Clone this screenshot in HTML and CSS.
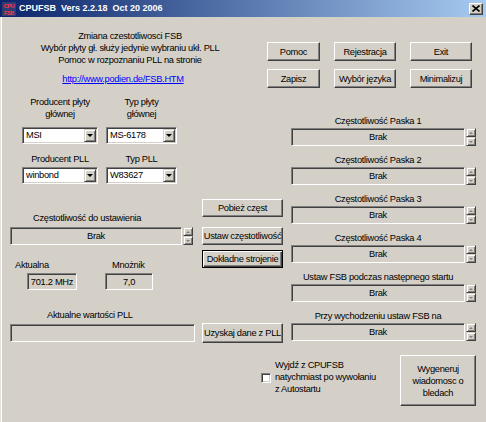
FILE: index.html
```html
<!DOCTYPE html>
<html lang="pl">
<head>
<meta charset="utf-8">
<title>CPUFSB</title>
<link rel="stylesheet" href="styles.css">
</head>
<body>
<div class="window">
  <div class="titlebar">
    <svg class="appicon" width="14" height="14" viewBox="0 0 14 14" aria-hidden="true">
      <rect width="14" height="14" fill="#2e3c78"/>
      <text x="7" y="6" text-anchor="middle" font-family="Liberation Sans" font-size="5.5" font-weight="bold" fill="#ff3a3a">CPU</text>
      <text x="7" y="12.5" text-anchor="middle" font-family="Liberation Sans" font-size="5.5" font-weight="bold" fill="#ff3a3a">FSB</text>
    </svg>
    <span class="title">CPUFSB  Vers 2.2.18  Oct 20 2006</span>
    <div class="close">
      <svg width="8" height="7" viewBox="0 0 8 7" aria-hidden="true"><path d="M0.5 0.5L7.5 6.5M7.5 0.5L0.5 6.5" stroke="#000" stroke-width="1.6"/></svg>
    </div>
  </div>

  <div class="top">
    <div class="intro">
      <div>Zmiana czestotliwosci FSB</div>
      <div>Wybór płyty gł. służy jedynie wybraniu ukł. PLL</div>
      <div>Pomoc w rozpoznaniu PLL na stronie</div>
      <div class="link"><a href="#">http://www.podien.de/FSB.HTM</a></div>
    </div>
    <div class="topbtns">
      <button class="btn">Pomoc</button>
      <button class="btn">Rejestracja</button>
      <button class="btn">Exit</button>
      <button class="btn">Zapisz</button>
      <button class="btn">Wybór języka</button>
      <button class="btn">Minimalizuj</button>
    </div>
  </div>

  <div class="main">
    <div class="leftcol">
      <div class="pair">
        <div class="c1 lbl">Producent płyty<br>głównej</div>
        <div class="c2 lbl">Typ płyty<br>głównej</div>
      </div>
      <div class="pair r-combos-a">
        <div class="c1 combo"><span class="val">MSI</span><span class="drop"></span></div>
        <div class="c2 combo"><span class="val">MS-6178</span><span class="drop"></span></div>
      </div>
      <div class="pair r-labels-b">
        <div class="c1 lbl">Producent PLL</div>
        <div class="c2 lbl">Typ PLL</div>
      </div>
      <div class="pair r-combos-b">
        <div class="c1 combo"><span class="val">winbond</span><span class="drop"></span></div>
        <div class="c2 combo"><span class="val">W83627</span><span class="drop"></span></div>
      </div>

      <div class="freq-lbl">Częstotliwość do ustawienia</div>
      <div class="fieldrow freq-row">
        <div class="field freq-field">Brak</div>
        <div class="spin"><span class="up"></span><span class="dn"></span></div>
      </div>

      <div class="akt-row">
        <span class="akt">Aktualna</span>
        <span>Mnożnik</span>
      </div>
      <div class="val-row">
        <div class="vbox v1">701.2 MHz</div>
        <div class="vbox v2">7,0</div>
      </div>

      <div class="pll-lbl">Aktualne wartości PLL</div>
      <div class="field pll-field"></div>
    </div>

    <div class="midcol">
      <button class="btn b-pobiez">Pobież częst</button>
      <button class="btn b-ustaw">Ustaw częstotliwość</button>
      <button class="btn default b-dokl">Dokładne strojenie</button>
      <button class="btn b-uzyskaj">Uzyskaj dane z PLL</button>
    </div>

    <div class="rightcol">
      <div class="grp">
        <div class="glbl">Częstotliwość Paska 1</div>
        <div class="fieldrow"><div class="field">Brak</div><div class="spin"><span class="up"></span><span class="dn"></span></div></div>
      </div>
      <div class="grp">
        <div class="glbl">Częstotliwość Paska 2</div>
        <div class="fieldrow"><div class="field">Brak</div><div class="spin"><span class="up"></span><span class="dn"></span></div></div>
      </div>
      <div class="grp">
        <div class="glbl">Częstotliwość Paska 3</div>
        <div class="fieldrow"><div class="field">Brak</div><div class="spin"><span class="up"></span><span class="dn"></span></div></div>
      </div>
      <div class="grp">
        <div class="glbl">Częstotliwość Paska 4</div>
        <div class="fieldrow"><div class="field">Brak</div><div class="spin"><span class="up"></span><span class="dn"></span></div></div>
      </div>
      <div class="grp">
        <div class="glbl">Ustaw FSB podczas następnego startu</div>
        <div class="fieldrow"><div class="field">Brak</div><div class="spin"><span class="up"></span><span class="dn"></span></div></div>
      </div>
      <div class="grp">
        <div class="glbl">Przy wychodzeniu ustaw FSB na</div>
        <div class="fieldrow"><div class="field">Brak</div><div class="spin"><span class="up"></span><span class="dn"></span></div></div>
      </div>
    </div>
  </div>

  <div class="bottom">
    <div class="chk"></div>
    <div class="chktext">Wyjdź z CPUFSB<br>natychmiast po wywołaniu<br>z Autostartu</div>
    <button class="btn bigbtn">Wygeneruj<br>wiadomosc o<br>bledach</button>
  </div>
</div>
</body>
</html>
```

FILE: styles.css
```css
* { box-sizing: border-box; }
html, body { margin: 0; padding: 0; }
body {
  width: 486px;
  height: 422px;
  overflow: hidden;
  background: #d4d0c8;
  font-family: "Liberation Sans", Arial, sans-serif;
  font-size: 9.3px;
  letter-spacing: -0.3px;
  line-height: 12px;
  color: #000;
}
.window {
  width: 486px;
  height: 422px;
  background: #d4d0c8;
  box-shadow: inset 1px 0 #e4e2dc, inset 2px 0 #ffffff;
  display: flex;
  flex-direction: column;
}

/* title bar */
.titlebar {
  height: 17px;
  flex: none;
  display: flex;
  align-items: center;
  padding-left: 2px;
  background: linear-gradient(to right, #0a246a 0%, #a6caf0 100%);
}
.appicon { display: block; flex: none; margin-right: 3px; }
.title {
  color: #fff;
  font-family: "Liberation Sans", Arial, sans-serif;
  font-weight: bold;
  font-size: 9px;
  letter-spacing: 0;
  line-height: 17px;
  white-space: pre;
}
.close {
  margin-left: auto;
  margin-right: 3px;
  width: 14px;
  height: 12px;
  display: flex;
  align-items: center;
  justify-content: center;
  background: #d4d0c8;
  border: 1px solid;
  border-color: #fff #404040 #404040 #fff;
  box-shadow: inset -1px -1px #808080;
}
.close svg { display: block; }

/* generic controls */
.btn {
  display: flex;
  align-items: center;
  justify-content: center;
  margin: 0;
  padding: 0;
  background: #d4d0c8;
  border: 1px solid;
  border-color: #fff #404040 #404040 #fff;
  box-shadow: inset -1px -1px #808080;
  font: inherit;
  letter-spacing: inherit;
  color: #000;
  white-space: nowrap;
}
.btn.default {
  border-color: #000;
  box-shadow: inset 1px 1px #fff, inset -1px -1px #404040, inset -2px -2px #808080;
}
.field {
  height: 18px;
  background: #d4d0c8;
  border: 1px solid;
  border-color: #808080 #fff #fff #808080;
  box-shadow: inset 1px 1px #404040, inset -1px -1px #d4d0c8;
  display: flex;
  align-items: center;
  justify-content: center;
  flex: none;
}
.fieldrow { display: flex; gap: 1px; }
.spin {
  width: 10px;
  height: 18px;
  flex: none;
  display: flex;
  flex-direction: column;
}
.spin span {
  flex: 1;
  background: #d4d0c8;
  border: 1px solid;
  border-color: #d4d0c8 #404040 #404040 #d4d0c8;
  box-shadow: inset 1px 1px #fff, inset -1px -1px #808080;
  display: flex;
  align-items: center;
  justify-content: center;
}
.spin .up::before {
  content: "";
  border-left: 2px solid transparent;
  border-right: 2px solid transparent;
  border-bottom: 2px solid #808080;
}
.spin .dn::before {
  content: "";
  border-left: 2px solid transparent;
  border-right: 2px solid transparent;
  border-top: 2px solid #808080;
}
.combo {
  height: 17px;
  background: #fff;
  border: 1px solid;
  border-color: #808080 #fff #fff #808080;
  box-shadow: inset 1px 1px #404040, inset -1px -1px #d4d0c8;
  padding: 1px;
  display: flex;
}
.combo .val {
  flex: 1;
  padding-left: 2px;
  line-height: 13px;
  white-space: nowrap;
  overflow: hidden;
}
.combo .drop {
  width: 12px;
  flex: none;
  background: #d4d0c8;
  border: 1px solid;
  border-color: #d4d0c8 #404040 #404040 #d4d0c8;
  box-shadow: inset 1px 1px #fff, inset -1px -1px #808080;
  display: flex;
  align-items: center;
  justify-content: center;
}
.combo .drop::before {
  content: "";
  border-left: 3px solid transparent;
  border-right: 3px solid transparent;
  border-top: 3px solid #000;
}
.vbox {
  height: 17px;
  background: #d4d0c8;
  border: 1px solid;
  border-color: #808080 #fff #fff #808080;
  box-shadow: inset 1px 1px #404040, inset -1px -1px #d4d0c8;
  display: flex;
  align-items: center;
  justify-content: center;
  flex: none;
  white-space: nowrap;
}

/* top section */
.top { display: flex; height: 79px; flex: none; }
.intro {
  width: 260px;
  flex: none;
  padding-top: 13px;
  text-align: center;
  white-space: nowrap;
}
.link { margin-top: 7px; padding-right: 14px; }
.link a { color: #0000ff; text-decoration: underline; }
.topbtns {
  margin-left: 7px;
  margin-top: 25px;
  align-self: flex-start;
  display: grid;
  grid-template-columns: 53px 62px 62px;
  grid-auto-rows: 19px;
  column-gap: 14px;
  row-gap: 8px;
}

/* main section */
.main { display: flex; align-items: flex-start; height: 247px; flex: none; }
.leftcol { width: 198px; flex: none; display: flex; flex-direction: column; }
.midcol { width: 92px; flex: none; padding-left: 4px; display: flex; flex-direction: column; }
.rightcol {
  width: 196px;
  flex: none;
  padding-left: 1px;
  padding-top: 19px;
  display: flex;
  flex-direction: column;
  gap: 8px;
}

.pair { display: flex; padding-left: 22px; gap: 8px; }
.pair .c1 { width: 76px; flex: none; }
.pair .c2 { width: 71px; flex: none; }
.lbl { text-align: center; white-space: nowrap; }
.r-combos-a { margin-top: 7px; }
.r-labels-b { margin-top: 9px; }
.r-combos-b { margin-top: 2px; }

.freq-lbl { margin-top: 28px; padding-left: 33px; }
.freq-row { margin-top: 3px; padding-left: 10px; }
.freq-field { width: 172px; }

.akt-row { margin-top: 14px; padding-left: 15px; display: flex; }
.akt { width: 97px; flex: none; }
.val-row { margin-top: 2px; padding-left: 27px; display: flex; gap: 28px; }
.v1 { width: 50px; }
.v2 { width: 48px; }

.pll-lbl { margin-top: 19px; padding-left: 47px; }
.pll-field { margin-top: 3px; margin-left: 10px; width: 185px; }

.midcol .btn { width: 81px; height: 18px; }
.b-pobiez { margin-top: 103px; }
.b-ustaw { margin-top: 10px; }
.b-dokl { margin-top: 5px; }
.midcol .b-uzyskaj { margin-top: 55px; height: 20px; }

.grp { display: flex; flex-direction: column; }
.glbl { width: 174px; text-align: center; white-space: nowrap; margin-bottom: 1px; }
.rightcol .field { width: 174px; }

/* bottom row */
.bottom {
  display: flex;
  align-items: flex-start;
  margin-top: 12px;
  padding-left: 261px;
  padding-right: 10px;
}
.chk {
  width: 10px;
  height: 10px;
  flex: none;
  margin-top: 18px;
  background: #fff;
  border: 1px solid;
  border-color: #808080 #fff #fff #808080;
  box-shadow: inset 1px 1px #404040, inset -1px -1px #d4d0c8;
}
.chktext { margin-left: 4px; margin-top: 4px; white-space: nowrap; }
.bigbtn {
  margin-left: auto;
  width: 76px;
  height: 51px;
  flex-direction: column;
  text-align: center;
  line-height: 12px;
}
```
